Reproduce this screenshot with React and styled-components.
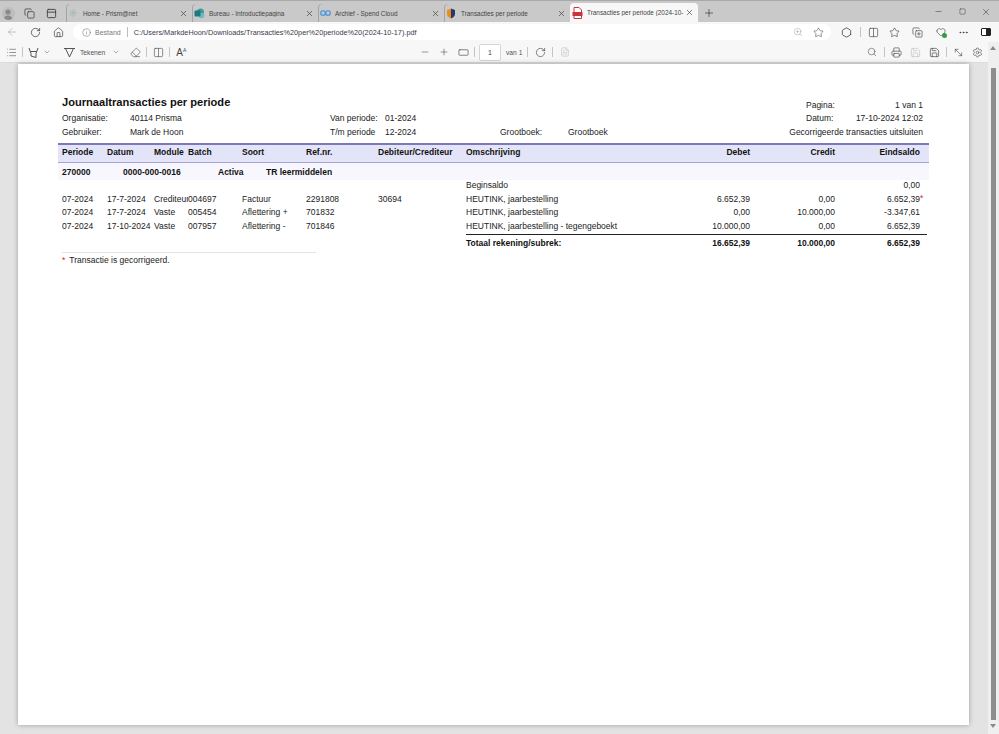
import React from "react";
import styled, { createGlobalStyle } from "styled-components";
import {
  ArrowLeft,
  RotateCw,
  Home,
  Info,
  ZoomIn,
  Star,
  Columns2,
  Plus,
  Minus,
  X,
  Square,
  MoreHorizontal,
  Eraser,
  Search,
  Printer,
  Save,
  MoveDiagonal2,
  Settings,
  ChevronDown,
  RectangleHorizontal,
  Copy,
  CopyPlus,
  Hexagon,
  FileText,
  Heart,
  List,
  PanelTop,
} from "lucide-react";

const GlobalStyle = createGlobalStyle`
  html, body {
    margin: 0;
    padding: 0;
    height: 734px;
    overflow: hidden;
    background: #e3e3e3;
    font-family: "Liberation Sans", Arial, sans-serif;
  }
`;

const tabs = [
  { title: "Home - Prism@net", icon: "home" },
  { title: "Bureau - Introductiepagina", icon: "bureau" },
  { title: "Archief - Spend Cloud", icon: "archief" },
  { title: "Transacties per periode", icon: "shield" },
  { title: "Transacties per periode (2024-10-", icon: "pdf", active: true },
];

const rows = [
  { oms: "Beginsaldo", eind: "0,00" },
  {
    periode: "07-2024",
    datum: "17-7-2024",
    module: "Crediteuren",
    batch: "004697",
    soort: "Factuur",
    ref: "2291808",
    deb: "30694",
    oms: "HEUTINK, jaarbestelling",
    debet: "6.652,39",
    credit: "0,00",
    eind: "6.652,39",
    marked: true,
  },
  {
    periode: "07-2024",
    datum: "17-7-2024",
    module: "Vaste",
    batch: "005454",
    soort: "Aflettering +",
    ref: "701832",
    oms: "HEUTINK, jaarbestelling",
    debet: "0,00",
    credit: "10.000,00",
    eind: "-3.347,61",
  },
  {
    periode: "07-2024",
    datum: "17-10-2024",
    module: "Vaste",
    batch: "007957",
    soort: "Aflettering -",
    ref: "701846",
    oms: "HEUTINK, jaarbestelling - tegengeboekt",
    debet: "10.000,00",
    credit: "0,00",
    eind: "6.652,39",
  },
];

function Favicon({ kind }) {
  if (kind === "home")
    return (
      <svg width="10" height="10" viewBox="0 0 10 10">
        <path d="M5 1v8M1 5h8M2.2 2.2l5.6 5.6M7.800 2.200L2.200 7.800" stroke="#a9b8bd" strokeWidth="1" />
      </svg>
    );
  if (kind === "bureau")
    return (
      <svg width="11" height="11" viewBox="0 0 11 11">
        <circle cx="6.5" cy="4" r="3.5" fill="#3f9a9c" />
        <circle cx="7.5" cy="7.5" r="2.8" fill="#6cbcbc" />
        <rect x="0.5" y="2.5" width="6" height="6" rx="1" fill="#1f7a80" />
      </svg>
    );
  if (kind === "archief")
    return (
      <svg width="11" height="8" viewBox="0 0 11 8">
        <circle cx="3" cy="4" r="2.3" fill="none" stroke="#3f8fe0" strokeWidth="1.1" />
        <circle cx="8" cy="4" r="2.3" fill="none" stroke="#3f8fe0" strokeWidth="1.1" />
      </svg>
    );
  if (kind === "shield")
    return (
      <svg width="10" height="11" viewBox="0 0 10 11">
        <path d="M5 .5L9 2v4c0 2-2 3.6-4 4.500V.5z" fill="#1f3a6e" />
        <path d="M5 .5L1 2v4c0 2 2 3.6 4 4.500V.5z" fill="#f08a1c" />
      </svg>
    );
  return (
    <svg width="11" height="12" viewBox="0 0 11 12">
      <path d="M2 .5h5l2.500 2.500v8.500H2z" fill="#fff" stroke="#c8343c" strokeWidth="1" />
      <rect x="0.5" y="5" width="10" height="4" fill="#c8343c" />
    </svg>
  );
}

function Marker() {
  return (
    <svg width="13" height="13" viewBox="0 0 13 13" fill="none" stroke="#555" strokeWidth="1">
      <path d="M2 2l2 5.500v2.500l5 1.500V7.500L11 2" />
      <path d="M3 5.500h7" />
    </svg>
  );
}

function DrawIcon() {
  return (
    <svg width="13" height="13" viewBox="0 0 13 13" fill="none" stroke="#555" strokeWidth="1">
      <path d="M2.500 2.500h8L6.500 11z" />
      <path d="M1 2.500h2M10 2.500h2" />
    </svg>
  );
}

function App() {
  return (
    <>
      <GlobalStyle />
      <Window>
        <TabStrip>
          <StripIcon $w={20} $ml={-2}>
            <Avatar>
              <svg width="10" height="11" viewBox="0 0 10 11" fill="#8a8a8a">
                <circle cx="5" cy="3" r="2.6" />
                <path d="M.5 11c0-3 2-4.500 4.500-4.500S9.500 8 9.500 11z" />
              </svg>
            </Avatar>
          </StripIcon>
          <StripIcon $w={22}>
            <Copy size={11} strokeWidth={1.5} />
          </StripIcon>
          <StripIcon $w={22}>
            <PanelTop size={11} strokeWidth={1.8} />
          </StripIcon>
          <TabList>
            {tabs.map((tab) => (
              <Tab key={tab.icon} $active={tab.active}>
                <TabIcon>
                  <Favicon kind={tab.icon} />
                </TabIcon>
                <TabTitle>{tab.title}</TabTitle>
                <X size={9} strokeWidth={1.6} color="#333" />
              </Tab>
            ))}
          </TabList>
          <StripIcon $w={22}>
            <Plus size={12} strokeWidth={1.4} />
          </StripIcon>
          <WindowControls>
            <StripIcon $w={24}>
              <Minus size={9} strokeWidth={1.3} />
            </StripIcon>
            <StripIcon $w={24}>
              <Square size={7} strokeWidth={1.5} />
            </StripIcon>
            <StripIcon $w={24}>
              <X size={10} strokeWidth={1.3} />
            </StripIcon>
          </WindowControls>
        </TabStrip>

        <AddressBar>
          <NavButton $w={24} $dim>
            <ArrowLeft size={12} strokeWidth={1.3} />
          </NavButton>
          <NavButton $w={22}>
            <RotateCw size={11} strokeWidth={1.5} />
          </NavButton>
          <NavButton $w={25}>
            <Home size={11} strokeWidth={1.4} />
          </NavButton>
          <UrlPill>
            <Info size={9} strokeWidth={1.3} color="#666" />
            <Scheme>Bestand</Scheme>
            <UrlSep />
            <Url>C:/Users/MarkdeHoon/Downloads/Transacties%20per%20periode%20(2024-10-17).pdf</Url>
            <PillIcons>
              <NavButton $w={21} $dim>
                <ZoomIn size={10} strokeWidth={1.3} />
              </NavButton>
              <NavButton $w={21}>
                <Star size={11} strokeWidth={1.1} />
              </NavButton>
            </PillIcons>
          </UrlPill>
          <BrowserTools>
            <NavButton $w={24}>
              <Hexagon size={11} strokeWidth={1.6} />
            </NavButton>
            <ThinSep />
            <NavButton $w={20}>
              <Columns2 size={11} strokeWidth={1.3} />
            </NavButton>
            <NavButton $w={23}>
              <Star size={11} strokeWidth={1.3} />
            </NavButton>
            <NavButton $w={23}>
              <CopyPlus size={11} strokeWidth={1.3} />
            </NavButton>
            <NavButton $w={23}>
              <Heart size={10} strokeWidth={1.4} />
              <GreenDot />
            </NavButton>
            <NavButton $w={23}>
              <MoreHorizontal size={11} strokeWidth={1.6} />
            </NavButton>
            <NavButton $w={22}>
              <SidebarIcon />
            </NavButton>
          </BrowserTools>
        </AddressBar>

        <Main>
          <Viewer>
            <PdfToolbar>
              <ToolGroup $width={416}>
                <Tool $w={18} $ml={2}>
                  <List size={11} strokeWidth={1.2} />
                </Tool>
                <ThinSep />
                <Tool $w={16}>
                  <Marker />
                </Tool>
                <Tool $w={12}>
                  <ChevronDown size={8} strokeWidth={1.3} />
                </Tool>
                <Tool $w={18} $ml={7}>
                  <DrawIcon />
                </Tool>
                <ToolLabel>Tekenen</ToolLabel>
                <Tool $w={12} $ml={5}>
                  <ChevronDown size={8} strokeWidth={1.3} />
                </Tool>
                <Tool $w={18} $ml={4}>
                  <Eraser size={11} strokeWidth={1.3} />
                </Tool>
                <ThinSep />
                <Tool $w={18}>
                  <Columns2 size={11} strokeWidth={1.3} />
                </Tool>
                <ThinSep />
                <Tool $w={18}>
                  <ReadAloud>
                    A<small>A</small>
                  </ReadAloud>
                </Tool>
              </ToolGroup>
              <ToolGroup>
                <Tool $w={18}>
                  <Minus size={10} strokeWidth={1.3} />
                </Tool>
                <Tool $w={20}>
                  <Plus size={10} strokeWidth={1.3} />
                </Tool>
                <Tool $w={18}>
                  <RectangleHorizontal size={11} strokeWidth={1.4} />
                </Tool>
                <ThinSep />
                <PageBox>1</PageBox>
                <ToolLabel $ml={5}>van 1</ToolLabel>
                <ThinSep $ml={5} />
                <Tool $w={20}>
                  <RotateCw size={11} strokeWidth={1.4} />
                </Tool>
                <ThinSep />
                <Tool $w={20} $dim>
                  <FileText size={10} strokeWidth={1.2} />
                </Tool>
              </ToolGroup>
              <ToolGroup $end>
                <Tool $w={19}>
                  <Search size={10} strokeWidth={1.3} />
                </Tool>
                <ThinSep />
                <Tool $w={19}>
                  <Printer size={11} strokeWidth={1.4} />
                </Tool>
                <Tool $w={19} $dim>
                  <Save size={11} strokeWidth={1.2} />
                </Tool>
                <Tool $w={19}>
                  <Save size={11} strokeWidth={1.5} />
                </Tool>
                <ThinSep />
                <Tool $w={19}>
                  <MoveDiagonal2 size={11} strokeWidth={1.3} />
                </Tool>
                <Tool $w={19}>
                  <Settings size={11} strokeWidth={1.3} />
                </Tool>
              </ToolGroup>
            </PdfToolbar>

            <PageArea>
              <Page>
                <ReportHead>
                  <Title>Journaaltransacties per periode</Title>
                  <span>Pagina:</span>
                  <Value>1 van 1</Value>

                  <span>Organisatie:</span>
                  <span>40114 Prisma</span>
                  <span>Van periode:</span>
                  <span>01-2024</span>
                  <span />
                  <span />
                  <span>Datum:</span>
                  <Value>17-10-2024 12:02</Value>

                  <span>Gebruiker:</span>
                  <span>Mark de Hoon</span>
                  <span>T/m periode</span>
                  <span>12-2024</span>
                  <span>Grootboek:</span>
                  <span>Grootboek</span>
                  <Exclude>Gecorrigeerde transacties uitsluiten</Exclude>
                </ReportHead>

                <HeadBand>
                  <span>Periode</span>
                  <span>Datum</span>
                  <span>Module</span>
                  <span>Batch</span>
                  <span>Soort</span>
                  <span>Ref.nr.</span>
                  <span>Debiteur/Crediteur</span>
                  <span>Omschrijving</span>
                  <Num>Debet</Num>
                  <Num>Credit</Num>
                  <Num>Eindsaldo</Num>
                </HeadBand>

                <GroupBand>
                  <GroupCode>270000</GroupCode>
                  <GroupAccount>0000-000-0016</GroupAccount>
                  <GroupType>Activa</GroupType>
                  <span>TR leermiddelen</span>
                </GroupBand>

                <Rows>
                  {rows.map((row, i) => (
                    <Row key={i}>
                      <Cell>{row.periode}</Cell>
                      <Cell>{row.datum}</Cell>
                      <Cell>{row.module}</Cell>
                      <Cell>{row.batch}</Cell>
                      <Cell>{row.soort}</Cell>
                      <Cell>{row.ref}</Cell>
                      <Cell>{row.deb}</Cell>
                      <Cell>{row.oms}</Cell>
                      <Num>{row.debet}</Num>
                      <Num>{row.credit}</Num>
                      <Num>
                        {row.eind}
                        {row.marked && <Mark>*</Mark>}
                      </Num>
                    </Row>
                  ))}
                </Rows>

                <TotalRow>
                  <span>Totaal rekening/subrek:</span>
                  <Num>16.652,39</Num>
                  <Num>10.000,00</Num>
                  <Num>6.652,39</Num>
                </TotalRow>

                <Footnote>
                  <FootMark>*</FootMark>
                  Transactie is gecorrigeerd.
                </Footnote>
              </Page>
            </PageArea>
          </Viewer>

          <Scrollbar>
            <ArrowUp />
            <Thumb />
            <ArrowDown />
          </Scrollbar>
        </Main>
      </Window>
    </>
  );
}

const SidebarIcon = styled.span`
  width: 10px;
  height: 8px;
  box-sizing: border-box;
  border: 1px solid #222;
  border-radius: 1px;
  background: linear-gradient(to right, #fff 55%, #222 55%);
`;

const Window = styled.div`
  width: 999px;
  height: 734px;
  display: flex;
  flex-direction: column;
  overflow: hidden;
  color: #333;
`;

const TabStrip = styled.div`
  height: 22px;
  box-sizing: border-box;
  display: flex;
  align-items: flex-end;
  background: #c9c9c9;
  border-top: 1px solid #a8a8a8;
  flex: none;
`;

const StripIcon = styled.div`
  width: ${(p) => p.$w}px;
  margin-left: ${(p) => p.$ml || 0}px;
  height: 18px;
  flex: none;
  display: flex;
  align-items: center;
  justify-content: center;
  color: #333;
`;

const Avatar = styled.span`
  width: 13px;
  height: 13px;
  display: flex;
  align-items: flex-end;
  justify-content: center;
  overflow: hidden;
  border-radius: 50%;
  background: #bdbdbd;
`;

const TabList = styled.div`
  margin-left: 4px;
  display: flex;
  align-items: flex-end;
`;

const Tab = styled.div`
  width: ${(p) => (p.$active ? 128 : 126)}px;
  height: ${(p) => (p.$active ? 19 : 18)}px;
  box-sizing: border-box;
  flex: none;
  display: flex;
  align-items: center;
  padding: 0 4px 0 1px;
  font-size: 6.4px;
  color: #444;
  border-radius: 4px 4px 0 0;
  background: ${(p) => (p.$active ? "#f7f7f7" : "transparent")};
  box-shadow: ${(p) => (p.$active ? "none" : "inset 1px 0 0 0 #a4a4a4")};
`;

const TabIcon = styled.span`
  width: 12px;
  margin-right: 4px;
  flex: none;
  display: flex;
  align-items: center;
  justify-content: center;
`;

const TabTitle = styled.span`
  flex: 1;
  min-width: 0;
  white-space: nowrap;
  overflow: hidden;
`;

const WindowControls = styled.div`
  margin-left: auto;
  padding-right: 1px;
  display: flex;
  align-self: center;
`;

const AddressBar = styled.div`
  height: 20px;
  flex: none;
  display: flex;
  align-items: center;
  background: #f7f7f7;
`;

const NavButton = styled.div`
  position: relative;
  width: ${(p) => p.$w}px;
  height: 16px;
  flex: none;
  display: flex;
  align-items: center;
  justify-content: center;
  color: ${(p) => (p.$dim ? "#a8a8a8" : "#333")};
`;

const GreenDot = styled.i`
  position: absolute;
  right: 5px;
  bottom: 2px;
  width: 5px;
  height: 5px;
  border-radius: 50%;
  background: #2f9e44;
`;

const UrlPill = styled.div`
  width: 758px;
  height: 16px;
  margin-left: 2px;
  box-sizing: border-box;
  flex: none;
  display: flex;
  align-items: center;
  padding: 0 2px 0 9px;
  background: #fff;
  border-radius: 8px;
`;

const Scheme = styled.span`
  margin-left: 4px;
  font-size: 7px;
  color: #7a7a7a;
`;

const UrlSep = styled.span`
  width: 1px;
  height: 10px;
  margin: 0 6px 0 6px;
  background: #bdbdbd;
`;

const Url = styled.span`
  font-size: 7.3px;
  color: #3a3a4a;
  white-space: nowrap;
`;

const PillIcons = styled.div`
  margin-left: auto;
  display: flex;
`;

const BrowserTools = styled.div`
  margin-left: 3px;
  display: flex;
  align-items: center;
`;

const ThinSep = styled.span`
  width: 1px;
  height: 10px;
  margin: 0 2px 0 ${(p) => (p.$ml === undefined ? 2 : p.$ml)}px;
  flex: none;
  background: #c4c4c4;
`;

const Main = styled.div`
  flex: 1;
  min-height: 0;
  display: flex;
`;

const Viewer = styled.div`
  flex: 1;
  min-width: 0;
  display: flex;
  flex-direction: column;
`;

const PdfToolbar = styled.div`
  height: 21px;
  box-sizing: border-box;
  flex: none;
  display: flex;
  align-items: center;
  padding-right: 1.5px;
  background: #f7f7f7;
  border-bottom: 1px solid #dcdcdc;
`;

const ToolGroup = styled.div`
  display: flex;
  align-items: center;
  width: ${(p) => (p.$width ? `${p.$width}px` : "auto")};
  margin-left: ${(p) => (p.$end ? "auto" : 0)};
  flex: none;
`;

const Tool = styled.div`
  width: ${(p) => p.$w}px;
  margin-left: ${(p) => p.$ml || 0}px;
  height: 16px;
  flex: none;
  display: flex;
  align-items: center;
  justify-content: center;
  color: ${(p) => (p.$dim ? "#b5b5b5" : "#444")};
`;

const ToolLabel = styled.span`
  margin-left: ${(p) => p.$ml || 2}px;
  font-size: 6.7px;
  color: #555;
`;

const ReadAloud = styled.span`
  font-size: 10px;
  color: #444;
  small {
    font-size: 5px;
    vertical-align: 4px;
  }
`;

const PageBox = styled.div`
  width: 22px;
  height: 17px;
  margin-left: 2px;
  box-sizing: border-box;
  display: flex;
  align-items: center;
  justify-content: center;
  font-size: 7px;
  color: #444;
  background: #fff;
  border: 1px solid #d6d6d6;
  border-radius: 2px;
`;

const PageArea = styled.div`
  flex: 1;
  min-height: 0;
  padding: 1px 19px 9px 18px;
  background: #e3e3e3;
`;

const Page = styled.div`
  height: 100%;
  box-sizing: border-box;
  padding: 34px 40px 0;
  background: #fff;
  box-shadow: 0 0 5px rgba(0, 0, 0, 0.3);
  font-size: 8.5px;
  color: #222;
`;

const ReportHead = styled.div`
  display: grid;
  grid-template-columns: 68px 200px 55px 115px 68px 238px 51px 66px;
  grid-auto-rows: 13.5px;
  align-items: center;
  align-content: start;
  height: 45px;
  padding-left: 4px;
  white-space: nowrap;
`;

const Title = styled.h1`
  grid-column: 1 / 7;
  margin: -5px 0 0;
  font-size: 11.1px;
  line-height: 12px;
  font-weight: 700;
  color: #111;
`;

const Value = styled.span`
  justify-self: end;
`;

const Exclude = styled.span`
  grid-column: 7 / 9;
  justify-self: end;
`;

const tableColumns = "45px 47px 34px 54px 64px 72px 88px 200px 84px 85px 85px";

const HeadBand = styled.div`
  display: grid;
  grid-template-columns: ${tableColumns};
  align-items: center;
  height: 20px;
  box-sizing: border-box;
  padding: 0 0 3px 4px;
  background: #e4e4f8;
  border-top: 2px solid #7b79bd;
  border-bottom: 1px solid #a5a3da;
  font-weight: 700;
  color: #111;
  white-space: nowrap;
`;

const Num = styled.span`
  position: relative;
  text-align: right;
`;

const GroupBand = styled.div`
  display: flex;
  align-items: center;
  height: 17px;
  padding-left: 4px;
  background: #f7f7fd;
  font-weight: 700;
  color: #111;
  white-space: nowrap;
`;

const GroupCode = styled.span`
  width: 61px;
`;

const GroupAccount = styled.span`
  width: 95px;
`;

const GroupType = styled.span`
  width: 48px;
`;

const Rows = styled.div`
  margin-top: -2px;
`;

const Row = styled.div`
  display: grid;
  grid-template-columns: ${tableColumns};
  align-items: center;
  height: 13.7px;
  padding-left: 4px;
  white-space: nowrap;
`;

const Cell = styled.span`
  overflow: hidden;
`;

const Mark = styled.i`
  position: absolute;
  left: 100%;
  top: -1px;
  font-style: normal;
  color: #e01b24;
`;

const TotalRow = styled.div`
  display: grid;
  grid-template-columns: 200px 84px 85px 85px;
  align-items: center;
  height: 16px;
  margin: 1px 2px 0 408px;
  border-top: 1px solid #222;
  font-weight: 700;
  color: #111;
  white-space: nowrap;
`;

const Footnote = styled.div`
  width: 254px;
  margin: 1px 0 0 4px;
  padding-top: 2px;
  border-top: 1px solid #e4e4e4;
  line-height: 11px;
`;

const FootMark = styled.span`
  margin-right: 4px;
  color: #e01b24;
`;

const Scrollbar = styled.div`
  width: 11px;
  flex: none;
  display: flex;
  flex-direction: column;
  align-items: center;
  padding: 4px 1px 6px 0;
  box-sizing: border-box;
  background: #efefef;
`;

const ArrowUp = styled.span`
  flex: none;
  border: 3px solid transparent;
  border-top: 0;
  border-bottom: 4px solid #8a8a8a;
`;

const Thumb = styled.div`
  flex: 1;
  width: 5px;
  margin: 18px 0 4px;
  background: #8e8e8e;
`;

const ArrowDown = styled.span`
  flex: none;
  border: 3px solid transparent;
  border-bottom: 0;
  border-top: 4px solid #8a8a8a;
`;

export default App;
